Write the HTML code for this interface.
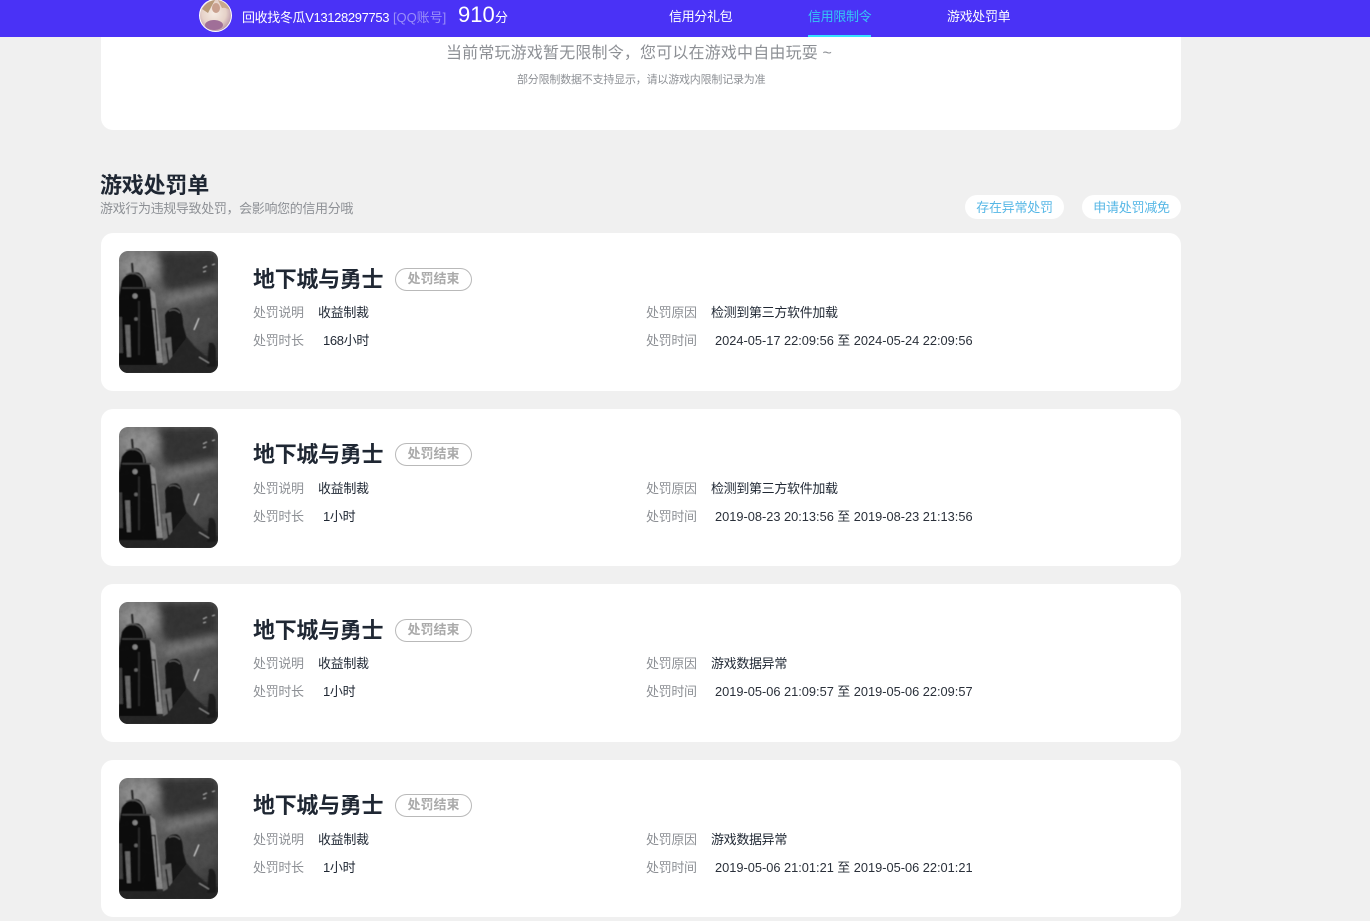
<!DOCTYPE html>
<html lang="zh-CN">
<head>
<meta charset="utf-8">
<title>游戏处罚单</title>
<style>
*{margin:0;padding:0;box-sizing:border-box}
html,body{width:1370px;height:921px;overflow:hidden;background:#f0f0f0}
body{position:relative;font-family:"Liberation Sans","Noto Sans CJK SC",sans-serif;color:#1f2733}
.t{position:absolute;white-space:nowrap;line-height:1}
.nav{position:absolute;left:0;top:0;width:1370px;height:37px;background:#4a32f6;z-index:2}
.panel{position:absolute;left:101px;top:20px;width:1080px;height:110px;background:#fff;border-radius:12px}
.card{position:absolute;left:101px;width:1080px;background:#fff;border-radius:12px}
.cover{position:absolute;left:18px;top:18px;width:99px;border-radius:9px;overflow:hidden}
.cover svg{display:block;width:99px;height:100%}
.card .t{font-size:13px;letter-spacing:-.33px}
.g{color:#8d9095}
.card .n{font-size:22px;font-weight:700;left:152px;color:#1f2733;letter-spacing:-.3px}
.b{position:absolute;left:294px;width:77px;height:23px;border:1px solid #b9b9b9;border-radius:12px;color:#aaa;font-size:13px;line-height:20px;text-align:center;font-weight:700}
.pill{position:absolute;top:195px;height:24px;background:#fff;border-radius:12px;color:#56b7e6;font-size:13px;letter-spacing:-.25px;line-height:25px;text-align:center}
.card .d{font-size:12.8px;letter-spacing:0;color:#2a303a}
.nv{font-size:13px;letter-spacing:-.35px;line-height:15px}
</style>
</head>
<body>
<svg width="0" height="0" style="position:absolute">
<defs>
<filter id="bl" x="-10%" y="-10%" width="120%" height="120%"><feGaussianBlur stdDeviation=".55"/></filter>
<filter id="bl2" x="-20%" y="-20%" width="140%" height="140%"><feGaussianBlur stdDeviation="4"/></filter>
<filter id="nz" x="0" y="0" width="100%" height="100%"><feTurbulence type="fractalNoise" baseFrequency=".18" numOctaves="3" seed="4"/><feColorMatrix values="0 0 0 0 0 0 0 0 0 0 0 0 0 0 0 1.6 0 0 0 -.55"/></filter>
<linearGradient id="sky" x1="0" y1="0" x2="1" y2="1"><stop offset="0" stop-color="#7c7c7c"/><stop offset=".5" stop-color="#5a5a5a"/><stop offset="1" stop-color="#363636"/></linearGradient>
<radialGradient id="av" cx=".45" cy=".42" r=".65"><stop offset="0" stop-color="#f6ece4"/><stop offset=".6" stop-color="#e6d2c8"/><stop offset="1" stop-color="#b08aa0"/></radialGradient>
<symbol id="art" viewBox="0 0 99 122" preserveAspectRatio="none">
<rect width="99" height="122" fill="url(#sky)"/>
<g filter="url(#bl2)">
<ellipse cx="22" cy="16" rx="20" ry="14" fill="#8e8e8e"/>
<path d="M40 0H99V32L48 40Q38 22 40 0Z" fill="#363636"/>
<path d="M44 46L99 34V42L48 54Z" fill="#7e7e7e"/>
<path d="M62 58H99V84L74 96Z" fill="#4e4e4e"/>
<path d="M0 108H99V122H0Z" fill="#262626"/>
</g>
<g filter="url(#bl)">
<path d="M0 46L3 30Q10 19 20 22Q26 26 27 36L33 40L38 114H0Z" fill="#101010"/>
<path d="M13 12L14 24" stroke="#2a2a2a" stroke-width="2"/>
<path d="M7 24Q14 20 21 25Q25 29 25 36" stroke="#5c5c5c" stroke-width="1.4" fill="none"/>
<path d="M3 37H32" stroke="#3c3c3c" stroke-width="1.5"/>
<path d="M31 38L36 42L44 112H38Z" fill="#8a8a8a"/>
<path d="M33 58L36 58L39 100" stroke="#222" stroke-width="1.5" fill="none"/>
<path d="M6 74L11 74L12 106H8Z" fill="#6c6c6c"/>
<path d="M0 66L3 66L4 102H0Z" fill="#3f3f3f"/>
<path d="M20 50V104" stroke="#2a2a2a" stroke-width="2"/>
<circle cx="16" cy="45" r="2.6" fill="#888"/>
<circle cx="17" cy="68" r="1.8" fill="#666"/>
<path d="M47 80L46 64Q50 56 58 57Q64 60 64 74L68 88L72 114H44Z" fill="#181818"/>
<path d="M50 60Q56 57 61 62" stroke="#5a5a5a" stroke-width="1.3" fill="none"/>
<path d="M43 88L52 86L54 114H44Z" fill="#6c6c6c"/>
<path d="M47 92L50 114" stroke="#1a1a1a" stroke-width="1.5"/>
<path d="M68 86L76 96L90 108L99 110V122H30L48 112Z" fill="#282828"/>
<path d="M75 79L80 67" stroke="#c4c4c4" stroke-width="1.5"/>
<path d="M84 17L88 15M93 14L96 13M84 21L87 20" stroke="#a8a8a8" stroke-width="1.4"/>
<path d="M90 92Q96 90 97 100V116H88Z" fill="#1e1e1e"/>
<path d="M0 114H40V122H0Z" fill="#252525"/>
<path d="M80 106L90 112" stroke="#8a8a8a" stroke-width="1.2"/>
</g>
<rect width="99" height="122" filter="url(#nz)" opacity=".1"/>
</symbol>
</defs>
</svg>

<div class="nav">
<svg style="position:absolute;left:199px;top:-1px" width="33" height="33" viewBox="0 0 33 33">
<circle cx="16.5" cy="16.5" r="16.5" fill="#fff"/>
<circle cx="16.5" cy="16.5" r="15.5" fill="url(#av)"/>
<path d="M3 10Q8 2 16 1Q12 8 9 14Z" fill="#b99a78"/>
<path d="M19 1Q28 3 31 11Q26 8 23 9Z" fill="#c9a98c"/>
<ellipse cx="17" cy="9" rx="4" ry="5" fill="#c9a08e"/>
<ellipse cx="15" cy="26" rx="9" ry="5" fill="#a06f98"/>
</svg>
<div class="t" style="left:242px;top:10px;font-size:13px;letter-spacing:-.36px;color:#fff;line-height:15px">回收找冬瓜V13128297753</div>
<div class="t" style="left:393px;top:10px;font-size:13px;color:#9a8ef8;line-height:15px;letter-spacing:-.05px">[QQ账号]</div>
<div class="t" style="left:458px;top:3px;font-size:22px;color:#fff;line-height:24px">910</div>
<div class="t" style="left:495px;top:10px;font-size:13px;color:#fff;line-height:15px">分</div>
<div class="t nv" style="left:669px;top:9px;color:#fff">信用分礼包</div>
<div class="t nv" style="left:808px;top:9px;color:#35c8f5">信用限制令</div>
<div style="position:absolute;left:808px;top:35px;width:63px;height:2px;background:#35e0ff"></div>
<div class="t nv" style="left:947px;top:9px;color:#fff">游戏处罚单</div>
</div>

<div class="panel"></div>
<div class="t" style="left:446px;top:45px;font-size:16px;letter-spacing:.17px;color:#8d9095;line-height:18px">当前常玩游戏暂无限制令，您可以在游戏中自由玩耍 ~</div>
<div class="t" style="left:517px;top:74px;font-size:11px;letter-spacing:-.2px;color:#8d9095;line-height:13px">部分限制数据不支持显示，请以游戏内限制记录为准</div>

<div class="t" style="left:100px;top:173px;font-size:22px;font-weight:700;letter-spacing:-.2px;color:#1f2733;line-height:25px">游戏处罚单</div>
<div class="t" style="left:100px;top:201px;font-size:13px;letter-spacing:-.35px;color:#8d9095;line-height:16px">游戏行为违规导致处罚，会影响您的信用分哦</div>
<div class="pill" style="left:965px;width:99px">存在异常处罚</div>
<div class="pill" style="left:1082px;width:99px">申请处罚减免</div>

<div class="card" style="top:233px;height:158px">
<div class="cover" style="height:122px"><svg><use href="#art" width="99" height="122"/></svg></div>
<div class="t n" style="top:34px;line-height:25px">地下城与勇士</div>
<div class="b" style="top:35px">处罚结束</div>
<div class="t g" style="left:152px;top:72px;line-height:15px">处罚说明</div>
<div class="t" style="left:217px;top:72px;line-height:15px">收益制裁</div>
<div class="t g" style="left:152px;top:100px;line-height:15px">处罚时长</div>
<div class="t" style="left:222px;top:100px;line-height:15px">168小时</div>
<div class="t g" style="left:545px;top:72px;line-height:15px">处罚原因</div>
<div class="t" style="left:610px;top:72px;line-height:15px">检测到第三方软件加载</div>
<div class="t g" style="left:545px;top:100px;line-height:15px">处罚时间</div>
<div class="t d" style="left:614px;top:100px;line-height:15px">2024-05-17 22:09:56 至 2024-05-24 22:09:56</div>
</div>

<div class="card" style="top:409px;height:157px">
<div class="cover" style="height:121px"><svg><use href="#art" width="99" height="121"/></svg></div>
<div class="t n" style="top:33px;line-height:25px">地下城与勇士</div>
<div class="b" style="top:34px">处罚结束</div>
<div class="t g" style="left:152px;top:72px;line-height:15px">处罚说明</div>
<div class="t" style="left:217px;top:72px;line-height:15px">收益制裁</div>
<div class="t g" style="left:152px;top:100px;line-height:15px">处罚时长</div>
<div class="t" style="left:222px;top:100px;line-height:15px">1小时</div>
<div class="t g" style="left:545px;top:72px;line-height:15px">处罚原因</div>
<div class="t" style="left:610px;top:72px;line-height:15px">检测到第三方软件加载</div>
<div class="t g" style="left:545px;top:100px;line-height:15px">处罚时间</div>
<div class="t d" style="left:614px;top:100px;line-height:15px">2019-08-23 20:13:56 至 2019-08-23 21:13:56</div>
</div>

<div class="card" style="top:584px;height:158px">
<div class="cover" style="height:122px"><svg><use href="#art" width="99" height="122"/></svg></div>
<div class="t n" style="top:34px;line-height:25px">地下城与勇士</div>
<div class="b" style="top:35px">处罚结束</div>
<div class="t g" style="left:152px;top:72px;line-height:15px">处罚说明</div>
<div class="t" style="left:217px;top:72px;line-height:15px">收益制裁</div>
<div class="t g" style="left:152px;top:100px;line-height:15px">处罚时长</div>
<div class="t" style="left:222px;top:100px;line-height:15px">1小时</div>
<div class="t g" style="left:545px;top:72px;line-height:15px">处罚原因</div>
<div class="t" style="left:610px;top:72px;line-height:15px">游戏数据异常</div>
<div class="t g" style="left:545px;top:100px;line-height:15px">处罚时间</div>
<div class="t d" style="left:614px;top:100px;line-height:15px">2019-05-06 21:09:57 至 2019-05-06 22:09:57</div>
</div>

<div class="card" style="top:760px;height:157px">
<div class="cover" style="height:121px"><svg><use href="#art" width="99" height="121"/></svg></div>
<div class="t n" style="top:33px;line-height:25px">地下城与勇士</div>
<div class="b" style="top:34px">处罚结束</div>
<div class="t g" style="left:152px;top:72px;line-height:15px">处罚说明</div>
<div class="t" style="left:217px;top:72px;line-height:15px">收益制裁</div>
<div class="t g" style="left:152px;top:100px;line-height:15px">处罚时长</div>
<div class="t" style="left:222px;top:100px;line-height:15px">1小时</div>
<div class="t g" style="left:545px;top:72px;line-height:15px">处罚原因</div>
<div class="t" style="left:610px;top:72px;line-height:15px">游戏数据异常</div>
<div class="t g" style="left:545px;top:100px;line-height:15px">处罚时间</div>
<div class="t d" style="left:614px;top:100px;line-height:15px">2019-05-06 21:01:21 至 2019-05-06 22:01:21</div>
</div>
</body>
</html>
